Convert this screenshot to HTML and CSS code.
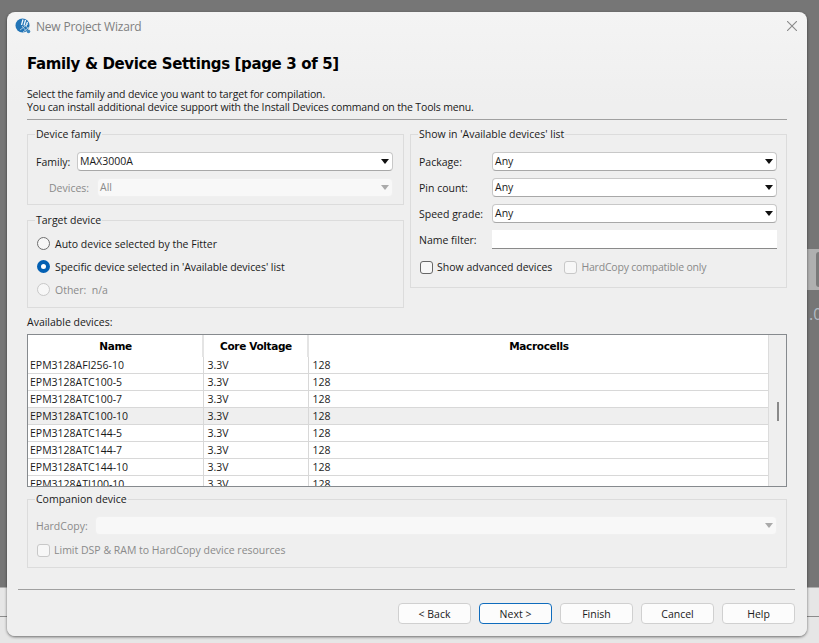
FILE: index.html

```html
<!DOCTYPE html>
<html lang="en">
<head>
  <meta charset="UTF-8">
  <title>New Project Wizard</title>
  <link rel="stylesheet" href="styles.css">
</head>
<body>

  <div class="desk-box"><div class="desk-inner"></div></div>
  <div class="desk-text">.0</div>

  <div class="dialog">
    <div class="titlebar">
      <svg class="app-icon" width="16" height="16" viewBox="0 0 16 16">
        <circle cx="7.5" cy="7.5" r="7" fill="#2274b6"/>
        <path d="M8 1.5 L6.5 7 M10.5 2 L9 7.5 M12.5 4 L11 8" stroke="#f2f8fc" stroke-width="1.3" fill="none"/>
        <path d="M5 12 L13 6 M8 14 L14.5 9 M7 8 L12 14 M10 7 L14.5 12" stroke="#b9cfe0" stroke-width="0.9" fill="none"/>
        <circle cx="13.5" cy="13.5" r="1.8" fill="#3a86c0"/>
      </svg>
      <span class="title">New Project Wizard</span>
      <svg class="close" width="10" height="10" viewBox="0 0 10 10">
        <path d="M0 0 L10 10 M10 0 L0 10" stroke="#8a8a8a" stroke-width="1.1"/>
      </svg>
    </div>

    <div class="content">
      <h1>Family &amp; Device Settings [page 3 of 5]</h1>
      <p class="intro">Select the family and device you want to target for compilation.<br>You can install additional device support with the Install Devices command on the Tools menu.</p>
      <hr class="rule">

      <div class="columns">
        <div class="col">
          <fieldset class="group family">
            <legend>Device family</legend>
            <div class="row">
              <label class="lbl-family">Family:</label>
              <div class="combo">MAX3000A<span class="arrow"></span></div>
            </div>
            <div class="row off">
              <label class="lbl-devices">Devices:</label>
              <div class="combo off">All<span class="arrow"></span></div>
            </div>
          </fieldset>

          <fieldset class="group target">
            <legend>Target device</legend>
            <div class="radio-row"><span class="radio"></span>Auto device selected by the Fitter</div>
            <div class="radio-row tight"><span class="radio on"></span>Specific device selected in 'Available devices' list</div>
            <div class="radio-row off"><span class="radio off"></span>Other:&nbsp; n/a</div>
          </fieldset>
        </div>

        <fieldset class="group show">
          <legend>Show in 'Available devices' list</legend>
          <div class="row"><label class="lbl-show">Package:</label><div class="combo">Any<span class="arrow"></span></div></div>
          <div class="row"><label class="lbl-show">Pin count:</label><div class="combo">Any<span class="arrow"></span></div></div>
          <div class="row"><label class="lbl-show">Speed grade:</label><div class="combo">Any<span class="arrow"></span></div></div>
          <div class="row"><label class="lbl-show">Name filter:</label><div class="filter"></div></div>
          <div class="checks">
            <span class="check-item"><span class="check"></span>Show advanced devices</span>
            <span class="check-item off narrow"><span class="check off"></span>HardCopy compatible only</span>
          </div>
        </fieldset>
      </div>

      <div class="list-label">Available devices:</div>
      <div class="list">
        <div class="list-scroll">
          <table>
            <thead>
              <tr><th class="c1">Name</th><th class="c2">Core Voltage</th><th>Macrocells</th></tr>
            </thead>
            <tbody>
              <tr><td>EPM3128AFI256-10</td><td>3.3V</td><td>128</td></tr>
              <tr><td>EPM3128ATC100-5</td><td>3.3V</td><td>128</td></tr>
              <tr><td>EPM3128ATC100-7</td><td>3.3V</td><td>128</td></tr>
              <tr class="selected"><td>EPM3128ATC100-10</td><td>3.3V</td><td>128</td></tr>
              <tr><td>EPM3128ATC144-5</td><td>3.3V</td><td>128</td></tr>
              <tr><td>EPM3128ATC144-7</td><td>3.3V</td><td>128</td></tr>
              <tr><td>EPM3128ATC144-10</td><td>3.3V</td><td>128</td></tr>
              <tr><td>EPM3128ATI100-10</td><td>3.3V</td><td>128</td></tr>
            </tbody>
          </table>
        </div>
        <div class="scrollbar"><div class="thumb"></div></div>
      </div>

      <fieldset class="group companion">
        <legend>Companion device</legend>
        <div class="row off">
          <label class="lbl-hardcopy">HardCopy:</label>
          <div class="combo off"><span class="arrow"></span></div>
        </div>
        <div class="check-item off limit"><span class="check off"></span>Limit DSP &amp; RAM to HardCopy device resources</div>
      </fieldset>
    </div>

    <hr class="rule footer-rule">
    <div class="buttons">
      <button>&lt; Back</button>
      <button class="default">Next &gt;</button>
      <button>Finish</button>
      <button>Cancel</button>
      <button>Help</button>
    </div>
  </div>

</body>
</html>
```

FILE: styles.css

```css
html, body { height: 100%; }
body {
  margin: 0;
  padding: 12px 0 0 7px;
  box-sizing: border-box;
  overflow: hidden;
  background: linear-gradient(#767676 0, #767676 587px, #e6e6e6 588px, #e6e6e6 616px, #8c8c8c 616px, #8c8c8c 617px, #e6e6e6 617px);
  font-family: "Open Sans", "Liberation Sans", sans-serif;
  font-size: 10.5px;
  color: #1a1a1a;
}

.desk-box { position: absolute; left: 807px; top: 249px; width: 12px; height: 41px; background: #b0b0b0; }
.desk-inner { position: absolute; left: 9px; top: 3px; width: 6px; height: 35px; border-radius: 3px; background: #7a7a7a; }
.desk-text { position: absolute; left: 809px; top: 303px; font-size: 16px; color: #b4bcc4; }

.dialog {
  position: relative;
  width: 800px;
  height: 624px;
  box-sizing: border-box;
  background: linear-gradient(#f4f4f4 0, #efefef 90px);
  border-radius: 8px;
  box-shadow: 0 1px 3px rgba(0,0,0,0.55);
}

.titlebar {
  height: 30px;
  display: flex;
  align-items: center;
  padding: 0 10px 2px 8px;
  box-sizing: border-box;
}
.app-icon { margin-right: 5px; }
.title { flex: 1; font-size: 12px; letter-spacing: -0.2px; color: #808080; }

.content { padding: 0 20px; }

h1 { margin: 12px 0 14px; font-size: 15px; line-height: 20px; font-weight: 700; color: #000; font-family: "DejaVu Sans", sans-serif; letter-spacing: -0.36px; }
.intro { margin: 0; line-height: 13px; letter-spacing: -0.155px; }

.rule { border: 0; height: 1px; background: #a0a0a0; margin: 5px 0 0; }

.columns { display: flex; gap: 6px; margin-top: 8px; }
.col { width: 377px; display: flex; flex-direction: column; gap: 9px; }

.group {
  margin: 0;
  padding: 0 10px 0 8px;
  min-width: 0;
  border: 1px solid #dcdcdc;
  box-sizing: border-box;
}
legend { padding: 0 1px; margin-left: -1px; line-height: 13px; }

.family { height: 77px; padding-top: 11px; }
.target { height: 94px; padding-top: 5px; }
.show { width: 377px; height: 160px; padding: 11px 9px 0 8px; }

.row { display: flex; align-items: center; height: 19px; margin-bottom: 7px; }
.row label { flex: none; }
.lbl-family { width: 41px; }
.lbl-devices { width: 61px; padding-left: 13px; box-sizing: border-box; }
.lbl-show { width: 73px; }
.lbl-hardcopy { width: 59px; }

.off { color: #8a8a8a; }
.tight { letter-spacing: -0.06px; }
.narrow { letter-spacing: -0.2px; }

.combo {
  flex: 1;
  position: relative;
  height: 19px;
  line-height: 17px;
  padding: 0 2px;
  box-sizing: border-box;
  background: #fff;
  border: 1px solid #c8c8c8;
  border-bottom-color: #a8a8a8;
  border-radius: 4px;
}
.combo.off { background: #f8f8f8; border-color: #f0f0f0; }
.arrow {
  position: absolute;
  right: 3px;
  top: 6px;
  border-left: 4px solid transparent;
  border-right: 4px solid transparent;
  border-top: 5px solid #111;
}
.combo.off .arrow { border-top-color: #aaa; }

.filter { flex: 1; height: 19px; box-sizing: border-box; background: #fff; border-bottom: 1px solid #8a8a8a; }

.radio-row { display: flex; align-items: center; height: 23px; }
.radio {
  width: 13px;
  height: 13px;
  margin: 0 5px 0 1px;
  flex: none;
  box-sizing: border-box;
  border: 1px solid #6f6f6f;
  border-radius: 50%;
  background: #f7f7f7;
}
.radio.on { border: 4px solid #0360b3; background: #fff; }
.radio.off { border-color: #c8c8c8; }

.checks { display: flex; gap: 11px; margin-top: 11px; }
.check-item { display: flex; align-items: center; }
.check {
  width: 13px;
  height: 13px;
  margin: 0 4px 0 1px;
  flex: none;
  box-sizing: border-box;
  border: 1px solid #666;
  border-radius: 3px;
  background: #f7f7f7;
}
.check.off { border-color: #c8c8c8; }

.list-label { margin-top: 7px; line-height: 14px; }
.list {
  display: flex;
  height: 153px;
  margin-top: 5px;
  box-sizing: border-box;
  border: 1px solid #868a8e;
  background: #fff;
}
.list-scroll { flex: 1; overflow: hidden; }
.scrollbar { position: relative; width: 18px; background: #efefef; border-left: 1px solid #dcdcdc; box-sizing: border-box; }
.thumb { position: absolute; left: 8px; top: 67px; width: 2px; height: 19px; background: #8a8a8a; }

table { width: 100%; table-layout: fixed; border-collapse: collapse; }
th { height: 21px; padding: 1px 0 0 1px; font-size: 10.5px; font-weight: 700; color: #000; font-family: "DejaVu Sans", sans-serif; letter-spacing: -0.35px; vertical-align: top; line-height: 21px; border-right: 2px solid #e4e4e4; }
th:last-child { border-right: 0; }
.c1 { width: 173px; }
.c2 { width: 102px; }
td { height: 16px; padding: 0 0 0 2px; line-height: 16px; white-space: nowrap; border-bottom: 1px solid #d8d8d8; border-right: 1px solid #d8d8d8; }
td + td { padding-left: 4px; }
td:last-child { border-right: 0; }
.selected td { background: #efefef; }

.companion { height: 75px; margin-top: 6px; padding: 10px 9px 0 8px; }
.limit { margin-top: 8px; }

.footer-rule { margin: 21px 12px 0 11px; }

.buttons { display: flex; justify-content: flex-end; gap: 8px; padding: 13px 12px 0 0; }
button {
  width: 73px;
  height: 21px;
  padding: 0;
  background: #fcfcfc;
  border: 1px solid #d0d0d0;
  border-radius: 4px;
  font: inherit;
  color: #1a1a1a;
}
button.default { border-color: #0f6cbd; }
```
